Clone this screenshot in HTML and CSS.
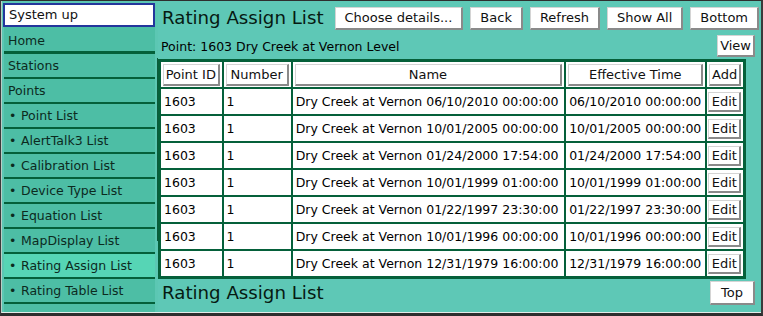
FILE: index.html
```html
<!DOCTYPE html>
<html lang="en">

<head>
    <meta charset="UTF-8">
    <meta name="viewport" content="width=device-width, initial-scale=1.0">
    <title>Rating Assign List</title>
    <link rel="stylesheet" href="styles.css">
</head>

<body>
    <div class="frame">
        <div class="side">
            <div class="status">System up</div>
            <ul class="menu">
                <li class="home">Home</li>
                <li>Stations</li>
                <li>Points</li>
                <li class="sub">Point List</li>
                <li class="sub">AlertTalk3 List</li>
                <li class="sub">Calibration List</li>
                <li class="sub">Device Type List</li>
                <li class="sub">Equation List</li>
                <li class="sub">MapDisplay List</li>
                <li class="sub active">Rating Assign List</li>
                <li class="sub">Rating Table List</li>
                <li class="more"></li>
            </ul>
            <div class="thumb"></div>
        </div>

        <div class="main">
            <div class="topbar">
                <h1>Rating Assign List</h1>
                <button class="btn first">Choose details...</button>
                <button class="btn">Back</button>
                <button class="btn">Refresh</button>
                <button class="btn">Show All</button>
                <button class="btn">Bottom</button>
            </div>
            <div class="pointline">
                <span>Point: 1603 Dry Creek at Vernon Level</span>
                <button class="btn small">View</button>
            </div>

            <table class="list">
                <colgroup>
                    <col class="c1"><col class="c2"><col class="c3"><col class="c4"><col class="c5">
                </colgroup>
                <thead>
                    <tr>
                        <th><button class="hbtn">Point ID</button></th>
                        <th><button class="hbtn">Number</button></th>
                        <th><button class="hbtn">Name</button></th>
                        <th><button class="hbtn">Effective Time</button></th>
                        <th><button class="hbtn">Add</button></th>
                    </tr>
                </thead>
                <tbody>
                    <tr><td>1603</td><td>1</td><td>Dry Creek at Vernon 06/10/2010 00:00:00</td><td>06/10/2010 00:00:00</td><td><button class="edit">Edit</button></td></tr>
                    <tr><td>1603</td><td>1</td><td>Dry Creek at Vernon 10/01/2005 00:00:00</td><td>10/01/2005 00:00:00</td><td><button class="edit">Edit</button></td></tr>
                    <tr><td>1603</td><td>1</td><td>Dry Creek at Vernon 01/24/2000 17:54:00</td><td>01/24/2000 17:54:00</td><td><button class="edit">Edit</button></td></tr>
                    <tr><td>1603</td><td>1</td><td>Dry Creek at Vernon 10/01/1999 01:00:00</td><td>10/01/1999 01:00:00</td><td><button class="edit">Edit</button></td></tr>
                    <tr><td>1603</td><td>1</td><td>Dry Creek at Vernon 01/22/1997 23:30:00</td><td>01/22/1997 23:30:00</td><td><button class="edit">Edit</button></td></tr>
                    <tr><td>1603</td><td>1</td><td>Dry Creek at Vernon 10/01/1996 00:00:00</td><td>10/01/1996 00:00:00</td><td><button class="edit">Edit</button></td></tr>
                    <tr><td>1603</td><td>1</td><td>Dry Creek at Vernon 12/31/1979 16:00:00</td><td>12/31/1979 16:00:00</td><td><button class="edit">Edit</button></td></tr>
                </tbody>
            </table>

            <div class="footbar">
                <h1>Rating Assign List</h1>
                <button class="btn top">Top</button>
            </div>
        </div>
    </div>
</body>

</html>
```

FILE: styles.css
```css
html, body {
    margin: 0;
    padding: 0;
    overflow: hidden;
}

body {
    font-family: "DejaVu Sans", sans-serif;
    font-size: 13px;
    color: #000;
    background: #5ec8b6;
}

.frame {
    display: flex;
    width: 763px;
    height: 316px;
    box-sizing: border-box;
    border-top: 1px solid #2e2e2e;
    border-left: 1px solid #3a3a3a;
    border-right: 2px solid #3a3a3a;
    border-bottom: 3px solid #2e2e2e;
}

/* left frame */
.side {
    position: relative;
    width: 157px;
    flex: none;
    box-sizing: border-box;
    padding: 2px 3px 0 2px;
    border-left: 1px solid #b8cfc6;
    border-bottom: 1px solid #e6ece9;
    background: #5cc7b3;
    overflow: hidden;
    font-size: 12.5px;
}

.status {
    height: 24px;
    margin-left: -1px;
    box-sizing: border-box;
    border: 2px solid #24369c;
    background: #fff;
    padding-left: 4px;
    line-height: 20px;
    font-size: 13px;
    color: #111;
}

.menu {
    list-style: none;
    margin: 0;
    padding: 0;
}

.menu li {
    height: 23px;
    line-height: 24px;
    padding-left: 4px;
    background: #4dbea5;
    border-bottom: 2px solid #04603a;
    color: #0c2a1e;
    white-space: nowrap;
}

.menu li.home {
    height: 24px;
    line-height: 27px;
    border-bottom-width: 3px;
}

.menu li.sub::before {
    content: "\2022";
    display: inline-block;
    width: 12px;
    padding-left: 1px;
}

.menu li.active {
    background: #56d5b5;
}

.thumb {
    position: absolute;
    right: 0;
    top: 57px;
    width: 1px;
    height: 183px;
    background: #0b5a3a;
}

/* right frame */
.main {
    flex: 1;
    border-bottom: 1px solid #e6ece9;
    overflow: hidden;
}

h1 {
    margin: 0;
    font-size: 18.2px;
    font-weight: normal;
    line-height: 24px;
    color: #061a12;
}

.topbar {
    display: flex;
    align-items: center;
    padding: 5px 0 0 4px;
}

.btn {
    font-family: "DejaVu Sans", sans-serif;
    font-size: 13px;
    color: #111;
    background: #fff;
    height: 23px;
    padding: 0 9px;
    margin-left: 7px;
    border: 1px solid #d4d4d4;
    border-right: 2px solid #8a8a8a;
    border-bottom: 2px solid #8a8a8a;
    border-radius: 0;
}

.btn.first {
    margin-left: 11px;
}

.pointline {
    display: flex;
    align-items: center;
    justify-content: space-between;
    height: 24px;
    padding: 4px 6px 0 3px;
    font-size: 12.5px;
}

.btn.small {
    height: 22px;
    padding: 0 2px;
}

.list {
    border-collapse: collapse;
    table-layout: fixed;
    width: 588px;
    margin-top: 1px;
    border: 3px solid #05603a;
    font-size: 12.5px;
}

.list col.c1 { width: 63px; }
.list col.c2 { width: 69px; }
.list col.c3 { width: 273px; }
.list col.c4 { width: 141px; }
.list col.c5 { width: 38px; }

.list th,
.list td {
    border: 2px solid #05603a;
    background: #fff;
    height: 25px;
    padding: 0 0 0 3px;
    text-align: left;
    white-space: nowrap;
    overflow: hidden;
}

.list th {
    padding: 0 2px;
}

.hbtn {
    display: block;
    width: 100%;
    height: 22px;
    padding: 0;
    font-family: "DejaVu Sans", sans-serif;
    font-size: 13px;
    color: #111;
    background: #fff;
    border: 1px solid #d4d4d4;
    border-right: 2px solid #8a8a8a;
    border-bottom: 2px solid #8a8a8a;
}

.list td:last-child {
    padding: 0 2px 0 1px;
}

.edit {
    display: block;
    width: 33px;
    height: 20px;
    padding: 0;
    font-family: "DejaVu Sans", sans-serif;
    font-size: 13px;
    color: #111;
    background: #fff;
    border: 1px solid #d4d4d4;
    border-right: 2px solid #8a8a8a;
    border-bottom: 2px solid #8a8a8a;
}

.footbar {
    display: flex;
    align-items: center;
    justify-content: space-between;
    padding: 2px 6px 0 4px;
}

.footbar h1 {
    line-height: 22px;
}

.btn.top {
    height: 24px;
    padding: 0 10px;
}
```
